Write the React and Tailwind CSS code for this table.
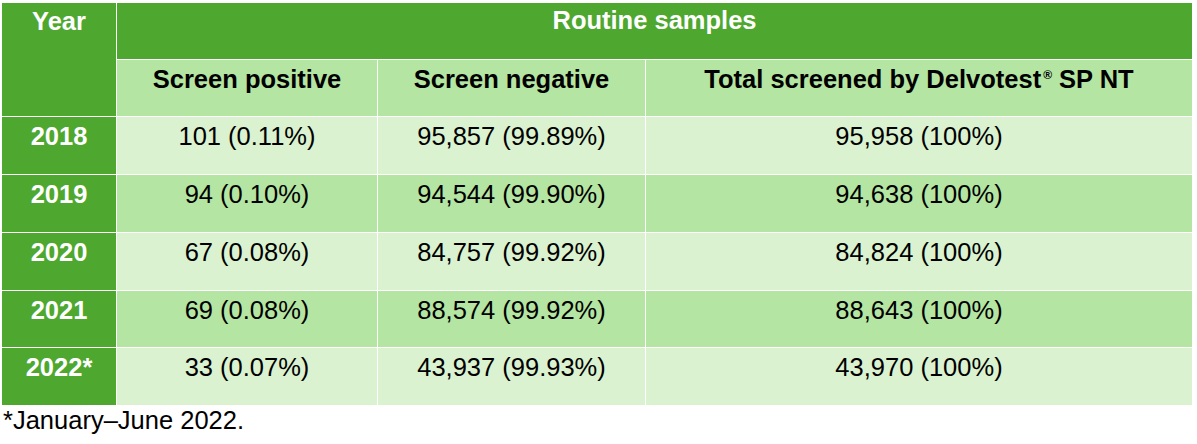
const rows = [
  { year: "2018", pos: "101 (0.11%)", neg: "95,857 (99.89%)", total: "95,958 (100%)" },
  { year: "2019", pos: "94 (0.10%)", neg: "94,544 (99.90%)", total: "94,638 (100%)" },
  { year: "2020", pos: "67 (0.08%)", neg: "84,757 (99.92%)", total: "84,824 (100%)" },
  { year: "2021", pos: "69 (0.08%)", neg: "88,574 (99.92%)", total: "88,643 (100%)" },
  { year: "2022*", pos: "33 (0.07%)", neg: "43,937 (99.93%)", total: "43,970 (100%)" },
];

export default function App() {
  return (
    <div className="min-h-screen bg-white pt-[3px] pl-[2px] font-['Liberation_Sans',Arial,sans-serif] text-[25.5px] leading-[30px] text-black">
      <div className="grid w-fit grid-cols-[114px_260px_267px_546px] grid-rows-[56px_56px_57px_57px_57px_56px_57px] gap-px bg-white">
        {/* header */}
        <div className="row-span-2 bg-[#4ea72e] pt-[3px] text-center font-bold text-white">Year</div>
        <div className="col-span-3 bg-[#4ea72e] pt-[2px] text-center font-bold text-white">Routine samples</div>
        <div className="bg-[#b4e5a2] pt-1 text-center font-bold">Screen positive</div>
        <div className="bg-[#b4e5a2] pt-1 text-center font-bold">Screen negative</div>
        <div className="bg-[#b4e5a2] pt-1 text-center font-bold">
          Total screened by Delvotest
          <span className="relative -top-[9px] ml-[2px] text-[12px] leading-none">®</span> SP NT
        </div>

        {/* data rows */}
        {rows.map((r, i) => {
          const bg = i % 2 === 0 ? "bg-[#daf2d0]" : "bg-[#b4e5a2]";
          return [
            <div key={r.year + "y"} className="bg-[#4ea72e] pt-1 text-center font-bold text-white">{r.year}</div>,
            <div key={r.year + "p"} className={`${bg} pt-1 text-center`}>{r.pos}</div>,
            <div key={r.year + "n"} className={`${bg} pt-1 text-center`}>{r.neg}</div>,
            <div key={r.year + "t"} className={`${bg} pt-1 text-center`}>{r.total}</div>,
          ];
        })}
      </div>
      <p className="pl-px">*January–June 2022.</p>
    </div>
  );
}
